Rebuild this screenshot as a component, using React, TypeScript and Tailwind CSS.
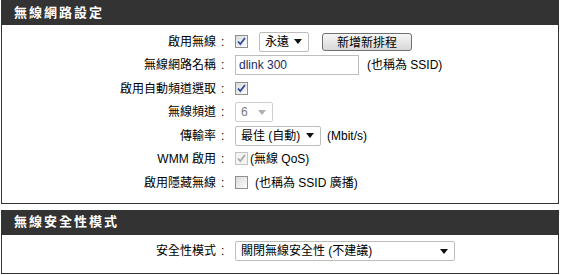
import React from "react";

const font = { fontFamily: '"Liberation Sans", "Noto Sans CJK TC", sans-serif' };

const Check = ({ checked = false, disabled = false }: { checked?: boolean; disabled?: boolean }) => (
  <span
    className={`inline-flex w-[13px] h-[13px] items-center justify-center border ${
      disabled ? "border-[#c4c4c4] bg-[#f4f4f4]" : "border-[#8f8f8f] bg-gradient-to-br from-[#dcdcdc] to-[#fbfbfb]"
    }`}
  >
    {checked && (
      <svg width="9" height="9" viewBox="0 0 9 9">
        <path
          d="M1 4.5 L3.3 7 L8 1"
          fill="none"
          stroke={disabled ? "#a8a8a8" : "#2f4d9c"}
          strokeWidth="1.8"
        />
      </svg>
    )}
  </span>
);

const Arrow = ({ color = "#000" }: { color?: string }) => (
  <svg width="8" height="5" viewBox="0 0 8 5">
    <path d="M0 0 H8 L4 5 Z" fill={color} />
  </svg>
);

const Select = ({
  text,
  width,
  disabled = false,
}: {
  text: string;
  width: string;
  disabled?: boolean;
}) => (
  <span
    className={`inline-flex h-[20px] items-center justify-between rounded-[2px] border bg-white pl-[5px] pr-[6px] text-[12px] ${width} ${
      disabled ? "border-[#cfcfcf] text-[#7a7a7a]" : "border-[#bdbdbd] text-black"
    }`}
  >
    <span>{text}</span>
    <Arrow color={disabled ? "#b0b0b0" : "#111"} />
  </span>
);

const Row = ({ label, children }: { label: string; children: React.ReactNode }) => (
  <div className="flex items-center h-[23.5px]">
    <div className="w-[214px] text-right text-[12px] text-black">{label}</div>
    <div className="w-[19px] pl-[5px] text-[12px] text-black">:</div>
    <div className="flex items-center gap-[6px] text-[12px] text-black">{children}</div>
  </div>
);

export default function App() {
  return (
    <div className="w-[561px] h-[275px] bg-white pl-[1px] pr-[2px]" style={font}>
      <div className="border border-[#333] border-t-0">
        <div className="h-[25px] bg-[#333] flex items-center pl-[12px] text-white font-bold text-[13px] tracking-[2px]">
          無線網路設定
        </div>
        <div className="pt-[5px] pb-[8px]">
          <Row label="啟用無線">
            <Check checked />
            <span className="ml-[5px]">
              <Select text="永遠" width="w-[50px]" />
            </span>
            <button className="ml-[7px] h-[18px] w-[90px] rounded-[3px] border border-[#707070] bg-gradient-to-b from-[#f6f6f6] to-[#d8d8d8] text-[12px] text-black">
              新增新排程
            </button>
          </Row>
          <Row label="無線網路名稱">
            <span className="inline-flex h-[20px] w-[124px] items-center border border-[#bdbdbd] px-[3px] text-[12px] text-[#1a2a66]">
              dlink 300
            </span>
            <span className="ml-[2px]">(也稱為 SSID)</span>
          </Row>
          <Row label="啟用自動頻道選取">
            <Check checked />
          </Row>
          <Row label="無線頻道">
            <Select text="6" width="w-[38px]" disabled />
          </Row>
          <Row label="傳輸率">
            <Select text="最佳 (自動)" width="w-[86px]" />
            <span>(Mbit/s)</span>
          </Row>
          <Row label="WMM 啟用">
            <span className="-mr-[4px]">
              <Check checked disabled />
            </span>
            <span>(無線 QoS)</span>
          </Row>
          <Row label="啟用隱藏無線">
            <Check />
            <span className="ml-[1px]">(也稱為 SSID 廣播)</span>
          </Row>
        </div>
      </div>
      <div className="mt-[6px] border border-[#333] border-t-0">
        <div className="h-[25px] bg-[#333] flex items-center pl-[12px] text-white font-bold text-[13px] tracking-[2px]">
          無線安全性模式
        </div>
        <div className="pt-[5px] pb-[10px]">
          <Row label="安全性模式">
            <Select text="關閉無線安全性 (不建議)" width="w-[220px]" />
          </Row>
        </div>
      </div>
    </div>
  );
}
